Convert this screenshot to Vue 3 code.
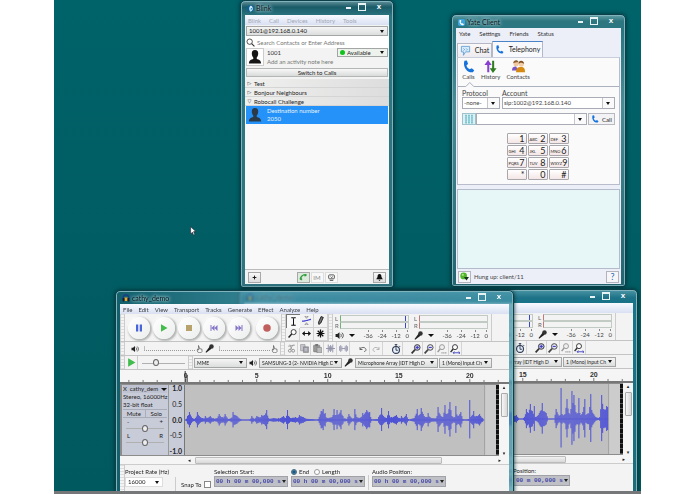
<script setup>
import { h } from 'vue'

const personPath = 'M8 0c3.300 0 4 2.500 3.500 5.500-.3 1.800-1 2.500-1.500 3v1.800c2.500.6 4.800 1.500 5 5.200H1c.2-3.700 2.500-4.600 5-5.200V8.500C5.500 8 4.800 7.300 4.500 5.500 4 2.500 4.700 0 8 0z'
const shapes = {
  blink: '<circle cx="8" cy="8" r="7.500" fill="#0b5f9c"/><path d="M9 1C4 4 4 9 7 15c5 0 8-6 5-11z" fill="#d8f0fb"/><path d="M9 6l3 2-4 5z" fill="#1780bd"/>',
  phone: '<path d="M3 1l3-.5L7.500 5 5.500 6.500c.5 2.500 1.800 4 4 5L12 10l3 2.500-1.500 2.500C7 16.500.500 9 3 1z" fill="#1672dc"/>',
  phoneApp: '<rect width="16" height="16" rx="4" fill="#3ba3dc"/><path d="M4 2l3 0 .5 3.500L6 7c.5 2 1.500 3 3 3.500l1.500-1L13.500 12 12 14C6 14.500 2 8 4 2z" fill="#fff"/>',
  phoneGreen: '<path d="M1 12C3 5 8 1.500 15 2v4l-4 1-.5-2.500C7.500 5.500 5.500 8 5 10.500l2 1.500-2.500 3z" fill="#2f9a3c"/>',
  audacity: '<path d="M2 10C1-1 15-1 14 10" fill="none" stroke="#163a8c" stroke-width="2.600"/><path d="M5 7h6v7H5z" fill="#f2a51f"/><rect x="1" y="8" width="4" height="7" rx="1.500" fill="#111d38"/><rect x="11" y="8" width="4" height="7" rx="1.500" fill="#111d38"/>',
  search: '<circle cx="6.500" cy="6.500" r="4.800" fill="none" stroke="#333" stroke-width="1.500"/><path d="M10 10l5 5" stroke="#333" stroke-width="2"/>',
  person: `<path d="${personPath}" fill="#161616"/>`,
  personGrey: `<path d="${personPath}" fill="#2c3a48"/>`,
  chat: '<path d="M2 2h12v8H8l-3 5v-5H2z" fill="#d8ebfa" stroke="#5b9bd5" stroke-width="1.200" stroke-linejoin="round"/><path d="M5 5l2 2M9 5l2 2M5 8l1-1M9 8l1-1" stroke="#3f86cc"/>',
  history: '<path d="M5 0L.500 6H4v9h2.500V6h3z" fill="#8a3fd0"/><path d="M11 16l4.500-6H12.500V1H10v9H7z" fill="#2f7d22"/>',
  contacts: '<circle cx="5" cy="4.500" r="3.200" fill="#f1c9a0"/><path d="M1.500 4C2-.5 7-.5 8 2.500L4 3z" fill="#8a5b2c"/><circle cx="11.500" cy="5" r="3.200" fill="#f3cda6"/><path d="M8 4.500C8-.5 14.500 0 15 4.500L11 3z" fill="#7c4c20"/><path d="M0 13c0-4 2-5 5-5l3 5z" fill="#7b55c4"/><path d="M5 15c0-5 2-6.500 6-6.500s5 2 5 6.500z" fill="#d68a12"/>',
  keypad: '<path d="M2 1h2.500v14H2zM6.700 1h2.500v14H6.700zM11.500 1H14v14h-2.500z" fill="#63b9c9"/><path d="M1 4.500h14M1 8h14M1 11.500h14" stroke="#c9eaf0" stroke-width=".8"/>',
  green: '<circle cx="6.500" cy="7" r="6" fill="#52b52c"/><circle cx="5" cy="5" r="2" fill="#a5e482"/><path d="M7 9h9l-4.500 6z" fill="#14361a"/>',
  plus: '<path d="M8 2v12M2 8h12" stroke="#111" stroke-width="3"/>',
  screen: '<rect x="1.500" y="2" width="13" height="9" rx="2" fill="none" stroke="#444" stroke-width="2"/><path d="M4 14.500h8M6 6l2 2 3-2" stroke="#444" stroke-width="2" fill="none"/>',
  bell: '<path d="M8 0c4 0 4.500 4 4.500 7l3 5H.500l3-5C3.500 4 4 0 8 0z" fill="#111"/><path d="M5.500 13h5L8 16z" fill="#111"/>',
  pause: '<path d="M2 1h4.500v14H2zM9.500 1H14v14H9.500z" fill="#4664dc"/>',
  play: '<path d="M2 .500L15 8 2 15.500z" fill="#42bc4c"/>',
  stop: '<rect x="2" y="2" width="12" height="12" fill="#b8a26c"/>',
  prev: '<path d="M1 2h2v12H1zM9 2v12L3 8zM15 2v12L9 8z" fill="#8474c8"/>',
  next: '<path d="M13 2h2v12h-2zM7 2v12l6-6zM1 2v12l6-6z" fill="#8474c8"/>',
  record: '<circle cx="8" cy="8" r="7.500" fill="#c0605c"/>',
  ibeam: '<path d="M4 1.500h3l1 1 1-1h3M8 2v12M4 14.500h3l1-1 1 1h3" fill="none" stroke="#111" stroke-width="1.800"/>',
  envelope: '<path d="M5 0h6L8 4zM5 16h6l-3-4z" fill="none" stroke="#555"/><path d="M0 9c4 1 5-1 8-1s4-2 8-2" fill="none" stroke="#4444d0" stroke-width="2.200"/>',
  pencil: '<path d="M9 1l4 1.500-4.500 10L5 15l-.5-4z" fill="#777" stroke="#111" stroke-width="1.500"/>',
  zoom: '<circle cx="10" cy="5.500" r="4.500" fill="#fff" stroke="#222" stroke-width="1.500"/><path d="M6.500 9L1 15" stroke="#222" stroke-width="2.600"/>',
  shift: '<path d="M0 8l5-4.500V7h6V3.500L16 8l-5 4.500V9H5v3.500z" fill="#111"/>',
  star: '<path d="M8 1v14M1 8h14M3 3l10 10M13 3L3 13" stroke="#111" stroke-width="2.200"/>',
  speaker: '<path d="M1 5.500h3L8 2v12l-4-3.500H1z" fill="#222"/><path d="M10 5c1.500 2 1.500 4 0 6M12.500 3c3 3 3 7 0 10" fill="none" stroke="#222" stroke-width="1.300"/>',
  mic: '<circle cx="11.500" cy="4.500" r="4" fill="#333"/><path d="M8 5l3.500 3.500L2 15.500 1 14z" fill="#222"/>',
  hand: '<path d="M5 1l2 6 5 1.500V13l-2 2.500H5L2.500 12l.5-4 2.500 2z" fill="#f7f7f7" stroke="#555" stroke-width="1.400"/>',
  cut: '<path d="M5 1l4 9M11 1L6 9M2 4l12-2" stroke="#999" stroke-width="1.500"/><circle cx="5" cy="12" r="2.500" fill="none" stroke="#888" stroke-width="1.500"/><circle cx="11" cy="12" r="2.500" fill="none" stroke="#888" stroke-width="1.500"/>',
  copy: '<path d="M1 1h8v11H1z" fill="#c8c8d0" stroke="#888"/><path d="M6 5h9v10H6z" fill="#9a9aa6" stroke="#777"/><path d="M8 8h5M8 10h5M8 12h5" stroke="#ddd"/>',
  paste: '<rect x="1" y="2" width="11" height="12" rx="1" fill="#999" stroke="#777"/><path d="M4 0h5v4H4z" fill="#777"/><path d="M7 6h8v10H7z" fill="#bbb" stroke="#777"/>',
  trim: '<path d="M4 1v14M12 1v14M0 8h16M6 4v8M8 2v12M10 4v8" stroke="#8e8ea8" stroke-width="1.600"/>',
  silence: '<path d="M1 4v8M3 2v12M5 4v8M11 4v8M13 2v12M15 4v8M5 8h6" stroke="#8e8ea8" stroke-width="1.500"/>',
  undo: '<path d="M2 4v5h5M2 9c2-5 10-6 12 0 0 3-2 4-4 4" fill="none" stroke="#555" stroke-width="1.700"/>',
  redo: '<path d="M14 4v5H9M14 9C12 4 4 3 2 9c0 3 2 4 4 4" fill="none" stroke="#aaa" stroke-width="1.700"/>',
  timer: '<circle cx="8" cy="9.500" r="5.500" fill="#e8f0fa" stroke="#2b3850" stroke-width="1.800"/><path d="M8 5v5h3M6 1h4M8 1v3M13 3l1.500 1.500" stroke="#2b3850" stroke-width="1.500" fill="none"/>',
  zoomIn: '<circle cx="10" cy="5.500" r="4.500" fill="#c6c6ee" stroke="#333" stroke-width="1.500"/><path d="M6.500 9L1 15" stroke="#333" stroke-width="2.600"/><path d="M10 3v5M7.500 5.500h5" stroke="#3b3bc0" stroke-width="1.600"/>',
  zoomOut: '<circle cx="10" cy="5.500" r="4.500" fill="#e2e2f2" stroke="#444" stroke-width="1.500"/><path d="M6.500 9L1 15" stroke="#444" stroke-width="2.600"/><path d="M7.500 5.500h5" stroke="#3b3bc0" stroke-width="1.600"/>',
  zoomSel: '<circle cx="8" cy="5" r="4" fill="#eee" stroke="#999" stroke-width="1.500"/><path d="M5 8l-4 5" stroke="#999" stroke-width="2.400"/><path d="M7 14h9" stroke="#999" stroke-width="2" stroke-dasharray="2 1"/>',
  zoomFit: '<circle cx="8" cy="5" r="4" fill="#fff" stroke="#333" stroke-width="1.500"/><path d="M5 8l-4 5" stroke="#333" stroke-width="2.400"/><path d="M5 14h11M7 12l-2 2 2 2M14 12l2 2-2 2" stroke="#4040c0" stroke-width="1.400" fill="none"/>'
}

const Icon = (props) =>
  h('svg', { viewBox: '0 0 16 16', width: props.size || 8, height: props.size || 8, 'aria-hidden': 'true', innerHTML: shapes[props.name] })
Icon.props = ['name', 'size']

const blinkMenu = ['Blink', 'Call', 'Devices', 'History', 'Tools']
const groups = [
  { name: 'Test', mark: '▷' },
  { name: 'Bonjour Neighbours', mark: '▷' },
  { name: 'Robocall Challenge', mark: '▽' }
]
const yateMenu = ['Yate', 'Settings', 'Friends', 'Status']
const keys = [
  ['', '1'], ['ABC', '2'], ['DEF', '3'],
  ['GHI', '4'], ['JKL', '5'], ['MNO', '6'],
  ['PQRS', '7'], ['TUV', '8'], ['WXYZ', '9'],
  ['', '*'], ['', '0'], ['', '#']
]
const audacityMenu = ['File', 'Edit', 'View', 'Transport', 'Tracks', 'Generate', 'Effect', 'Analyze', 'Help']
const transport = ['pause', 'play', 'stop', 'prev', 'next', 'record']
const tools = ['ibeam', 'envelope', 'pencil', 'zoom', 'shift', 'star']
const editTools = ['cut', 'copy', 'paste', 'trim', 'silence']
const zoomTools = ['zoomIn', 'zoomOut', 'zoomSel', 'zoomFit']
const ticks = Array.from({ length: 27 }, (_, i) => i - 4)

// Envelope points: [position, half height]
const quiet = [
  [0, 0], [2, 4], [4, 8], [7, 2], [10, 2], [12, 8], [14, 4], [17, 2], [20, 4], [22, 2], [25, 4], [28, 2], [32, 2], [34, 6], [37, 3], [40, 6],
  [43, 1], [46, 2], [48, 8], [52, 4], [56, 1], [64, 0], [67, 4], [70, 1], [72, 4], [77, 5], [80, 5], [82, 10], [84, 2], [89, 2], [94, 2],
  [99, 4], [101, 2], [103, 10], [106, 2], [111, 3], [115, 5], [119, 3], [126, 1], [134, 1], [137, 9], [139, 11], [141, 7], [143, 2],
  [148, 3], [150, 11], [151, 5], [153, 10], [154, 5], [157, 10], [159, 4], [163, 1], [165, 6], [168, 2], [170, 2], [171, 11], [173, 3],
  [176, 2], [179, 7], [183, 10], [186, 8], [188, 1], [194, 1], [198, 12], [200, 4], [203, 2], [205, 9], [208, 3], [213, 5], [216, 2],
  [218, 4], [220, 2], [223, 6], [225, 1], [231, 2], [234, 11], [236, 5], [238, 12], [241, 4], [243, 3], [245, 7], [248, 2], [253, 2],
  [255, 13], [258, 4], [260, 3], [262, 15], [264, 6], [267, 18], [269, 4], [272, 3], [273, 14], [275, 4], [278, 8], [280, 1], [286, 1],
  [287, 20], [288, 3], [291, 9], [294, 4], [297, 6], [300, 2], [302, 0]
]
const loud = [
  [0, 2], [60, 8], [120, 4], [180, 6], [205, 8], [209, 4], [212, 0], [216, 1], [219, 10], [221, 6], [223, 15], [225, 8], [227, 13], [228, 2],
  [231, 4], [235, 16], [239, 6], [241, 0], [247, 0], [249, 10], [252, 3], [253, 4], [254, 31], [255, 5], [258, 5], [260, 20], [262, 6],
  [264, 10], [265, 28], [266, 16], [267, 24], [269, 7], [271, 6], [272, 21], [273, 6], [276, 7], [278, 20], [279, 4], [283, 12], [284, 25],
  [285, 9], [289, 2], [293, 2], [295, 24], [297, 10], [300, 13], [301, 12], [302, 0]
]
function wave(points) {
  let d = ''
  for (let k = 0; k < points.length - 1; k++) {
    const [x0, a0] = points[k]
    const [x1, a1] = points[k + 1]
    for (let x = x0; x < x1; x++) {
      const t = (x - x0) / (x1 - x0)
      const noise = x === x0 ? 1 : 0.5 + 0.4 * Math.abs(Math.sin(x * 12.9))
      const a = Math.max(0.5, (a0 + (a1 - a0) * t) * noise)
      d += `M${x}.5 ${(35 - a).toFixed(1)}V${(35 + a * 0.92).toFixed(1)}`
    }
  }
  return d
}
const recorders = [
  { id: 'back', menu: [], path: wave(loud) },
  { id: 'front', menu: audacityMenu, path: wave(quiet) }
]
</script>

<template>
  <div class="screen">
    <main class="desktop">
      <svg class="cursor" viewBox="0 0 10 16" width="6" height="10" aria-hidden="true"><path d="M1 1v12l3-3 2 5 2-1-2-5h4z" fill="#fff" stroke="#223" /></svg>

      <section class="window blink">
        <header class="title"><Icon name="blink" :size="7" /><h2>Blink</h2>
          <span class="controls"><button class="min" aria-label="Minimize"></button><button class="max" aria-label="Maximize"></button><button class="close" aria-label="Close">x</button></span>
        </header>
        <div class="client">
          <nav class="menu faded"><a v-for="m in blinkMenu" :key="m" href="#">{{ m }}</a></nav>
          <label class="combo account"><select aria-label="Account"><option>1001@192.168.0.140</option></select></label>
          <label class="find"><Icon name="search" :size="9" /><input type="text" placeholder="Search Contacts or Enter Address" aria-label="Search" /></label>
          <div class="profile">
            <span class="avatar"><Icon name="person" :size="14" /></span>
            <div class="who"><b>1001</b><span>Add an activity note here</span></div>
            <label class="combo state"><i></i><select aria-label="Status"><option>Available</option></select></label>
          </div>
          <button class="switch">Switch to Calls</button>
          <div class="groups">
            <button v-for="g in groups" :key="g.name" class="group"><i>{{ g.mark }}</i>{{ g.name }}</button>
            <div class="contact"><Icon name="personGrey" :size="14" /><div><div>Destination number</div><div>2050</div></div></div>
          </div>
          <footer class="blinkbar">
            <button aria-label="Add"><Icon name="plus" :size="5" /></button>
            <span class="mid"><button class="on" aria-label="Call"><Icon name="phoneGreen" :size="8" /></button><button class="pale">IM</button><button class="pale" aria-label="Share screen"><Icon name="screen" :size="7" /></button></span>
            <button aria-label="Alerts"><Icon name="bell" :size="7" /></button>
          </footer>
        </div>
      </section>

      <section class="window yate">
        <header class="title"><Icon name="phoneApp" :size="7" /><h2>Yate Client</h2>
          <span class="controls"><button class="min" aria-label="Minimize"></button><button class="max" aria-label="Maximize"></button><button class="close" aria-label="Close">x</button></span>
        </header>
        <div class="client">
          <nav class="menu"><a v-for="m in yateMenu" :key="m" href="#">{{ m }}</a></nav>
          <div class="tabs">
            <button class="tab"><Icon name="chat" :size="11" />Chat</button>
            <button class="tab active"><Icon name="phone" :size="9" />Telephony</button>
          </div>
          <div class="panel">
            <div class="modes">
              <button><Icon name="phone" :size="13" />Calls</button>
              <button><Icon name="history" :size="13" />History</button>
              <button><Icon name="contacts" :size="13" />Contacts</button>
            </div>
            <svg class="notch" viewBox="0 0 164 5" width="100%" height="5" preserveAspectRatio="none" aria-hidden="true"><path d="M0 4.500H8l4-4 4 4H164" fill="none" stroke="#a9b0be" /></svg>
            <div class="fields">
              <label class="proto">Protocol<span class="combo boxed"><select><option>-none-</option></select></span></label>
              <label class="acct">Account<span class="combo boxed"><select><option>sip:1002@192.168.0.140</option></select></span></label>
            </div>
            <div class="dial">
              <button class="pad" aria-label="Keypad"><Icon name="keypad" :size="10" /></button>
              <label class="combo boxed number"><select aria-label="Number"><option></option></select></label>
              <button class="call"><Icon name="phone" :size="8" />Call</button>
            </div>
            <div class="keys"><button v-for="k in keys" :key="k[1]"><small>{{ k[0] }}</small>{{ k[1] }}</button></div>
          </div>
          <div class="log"></div>
          <footer class="yatebar"><button aria-label="Presence"><Icon name="green" :size="9" /></button><span>Hung up: client/11</span><button class="help">?</button></footer>
        </div>
      </section>

      <section v-for="r in recorders" :key="r.id" class="window audacity" :class="r.id">
        <header class="title"><Icon name="audacity" :size="8" /><h2>cathy_demo</h2>
          <span class="controls"><button class="min" aria-label="Minimize"></button><button class="max" aria-label="Maximize"></button><button class="close" aria-label="Close">x</button></span>
        </header>
        <div class="client">
          <nav class="menu"><a v-for="m in r.menu" :key="m" href="#">{{ m }}</a></nav>

          <div class="bar main">
            <i class="grip"></i>
            <div class="transport"><button v-for="t in transport" :key="t" :aria-label="t"><Icon :name="t" :size="8" /></button></div>
            <i class="grip"></i>
            <div class="tools"><button v-for="t in tools" :key="t" :aria-label="t"><Icon :name="t" :size="9" /></button></div>
            <i class="grip"></i>
            <div v-for="m in ['speaker', 'mic']" :key="m" class="meter" :class="m">
              <div class="level"><span>L</span><i></i></div>
              <div class="level"><span>R</span><i></i></div>
              <div class="scale"><Icon :name="m" :size="9" /><b></b><span>-36</span><span>-24</span><span>-12</span><span>0</span></div>
            </div>
            <div class="rest"></div>
          </div>

          <div class="bar mixer">
            <i class="grip"></i>
            <div class="mix"><Icon name="speaker" :size="8" /><span class="rail"></span><Icon name="hand" :size="8" /><Icon name="mic" :size="9" /><span class="rail"></span><Icon name="hand" :size="8" /></div>
            <i class="grip"></i>
            <div class="set"><button v-for="t in editTools" :key="t" :aria-label="t"><Icon :name="t" :size="9" /></button></div>
            <div class="set"><button aria-label="Undo"><Icon name="undo" :size="8" /></button><button aria-label="Redo"><Icon name="redo" :size="8" /></button></div>
            <div class="set"><button aria-label="Timer"><Icon name="timer" :size="10" /></button></div>
            <div class="set"><button v-for="t in zoomTools" :key="t" :aria-label="t"><Icon :name="t" :size="10" /></button></div>
          </div>

          <div class="bar device">
            <i class="grip"></i>
            <button class="go" aria-label="Play at speed"><Icon name="play" :size="9" /></button>
            <input class="slide" type="range" value="30" aria-label="Speed" />
            <i class="grip"></i>
            <label class="combo host"><select aria-label="Host"><option>MME</option></select></label>
            <Icon name="speaker" :size="8" />
            <label class="combo long"><select aria-label="Output"><option>SAMSUNG-3 (2- NVIDIA High D</option></select></label>
            <Icon name="mic" :size="9" />
            <label class="combo long"><select aria-label="Input"><option>Microphone Array (IDT High D</option></select></label>
            <label class="combo host"><select aria-label="Channels"><option>1 (Mono) Input Ch</option></select></label>
          </div>

          <svg class="ruler" viewBox="0 0 391 12" width="100%" height="12" aria-hidden="true">
            <path v-for="t in ticks" :key="t" :d="`M${(66 + t * 14.28).toFixed(1)} ${t % 5 ? 10 : 9}V12`" stroke="#555" stroke-width=".8" />
            <text v-for="n in [0, 5, 10, 15, 20]" :key="n" :x="66 + n * 14.28" y="8" text-anchor="middle">{{ n }}</text>
            <path d="M65.500 1V12M67.500 5V12" stroke="#333" />
          </svg>

          <div class="track">
            <div class="panelbox">
              <div class="name"><button aria-label="Close track">X</button><button class="tname">cathy_dem</button><b></b></div>
              <div>Stereo, 16000Hz</div>
              <div>32-bit float</div>
              <div class="mute"><button>Mute</button><button>Solo</button></div>
              <div class="sl"><span>-</span><span>+</span></div>
              <input class="slide" type="range" value="50" aria-label="Gain" />
              <div class="sl"><span>L</span><span>R</span></div>
              <input class="slide" type="range" value="50" aria-label="Pan" />
            </div>
            <div class="amps"><b>1.0</b><span>0.5</span><b>0.0</b><span>-0.5</span><b>-1.0</b></div>
            <svg class="wave" viewBox="0 0 314 70" preserveAspectRatio="none" aria-hidden="true">
              <rect width="302" height="70" fill="#bfc0bf" /><rect x="302" width="12" height="70" fill="#cbcccb" />
              <path d="M302.500 0V70" stroke="#a0a0a0" /><path d="M0 35H302" stroke="#6a6ad0" stroke-width=".8" />
              <path :d="r.path" stroke="#4c50d6" />
            </svg>
            <i class="edge"></i>
            <div class="vscroll"><span>▴</span><i></i><span>▾</span></div>
          </div>
          <div class="hscroll"><span>◂</span><i></i><span>▸</span></div>

          <div class="bottom">
            <i class="grip"></i>
            <div class="col rate"><label :for="'rate' + r.id">Project Rate (Hz)</label><span class="combo plain"><select :id="'rate' + r.id"><option>16000</option></select></span></div>
            <label class="snap">Snap To<input type="checkbox" /></label>
            <div class="col time"><label :for="'start' + r.id">Selection Start:</label><span class="stamp"><input :id="'start' + r.id" type="text" value="00 h 00 m 00,000 s" /></span></div>
            <div class="col time"><span class="radios"><label><input type="radio" :name="'mode' + r.id" checked />End</label><label><input type="radio" :name="'mode' + r.id" />Length</label></span><span class="stamp"><input type="text" aria-label="Selection end" value="00 h 00 m 00,000 s" /></span></div>
            <i class="rule"></i>
            <div class="col time"><label :for="'pos' + r.id">Audio Position:</label><span class="stamp"><input :id="'pos' + r.id" type="text" value="00 h 00 m 00,000 s" /></span></div>
          </div>
        </div>
      </section>
    </main>
    <div class="strip"></div>
  </div>
</template>

<style>
body { margin: 0; background: #fff; }
</style>

<style scoped>
* { box-sizing: border-box; }
.screen { height: 100vh; padding: 0 54px; display: flex; flex-direction: column; font: 6px/9px Lato, "Liberation Sans", sans-serif; color: #222; }
.desktop { flex: 1; min-height: 0; position: relative; overflow: hidden; background: linear-gradient(#00636a, #005e64 40%, #00595f); }
.strip { height: 3px; background: #757779; }
.cursor { position: absolute; left: 136px; top: 226px; }
button, input, select { font: inherit; color: inherit; margin: 0; padding: 0; border: 0; border-radius: 0; background: none; min-width: 0; appearance: none; }
button { display: flex; align-items: center; justify-content: center; white-space: nowrap; }
input:focus, select:focus { outline: none; }
a { color: inherit; text-decoration: none; }
svg { display: block; flex: none; }
h2 { margin: 0; font-size: 7px; font-weight: 400; color: #04151a; text-shadow: 0 0 3px #cfe8ec, 0 0 4px #b8dce2; }

.window { position: absolute; display: flex; flex-direction: column; padding: 0 4px 3px; border: 1px solid #0c3f48; border-radius: 5px 5px 3px 3px; box-shadow: inset 0 0 0 1px #7fb3bd, 0 0 4px #002f36; background: #397f8b; }
.blink { left: 186px; top: 0; width: 154px; height: 288px; background: linear-gradient(#66929b, #195c68 6px, #2d7783 16px, #2f7480); }
.yate { left: 397px; top: 14px; width: 175px; height: 273px; padding-bottom: 2px; background: linear-gradient(#66a0a8, #2d7680 6px, #297681 15px, #4a8c96 90px, #22646f); }
.audacity { width: 399px; height: 208px; }
.back { left: 185px; top: 289px; background: linear-gradient(#4c95a5, #1d7287 8px, #16758a 15px, #1c6b7a); }
.front { left: 61px; top: 290px; background: linear-gradient(90deg, rgba(22, 96, 110, .85), rgba(84, 156, 178, .6) 35%, rgba(72, 150, 170, .75)); backdrop-filter: blur(1px); }
.title { height: 13px; flex: none; display: flex; align-items: center; gap: 2px; padding: 1px 0 0 2px; }
.blink .title { height: 14px; }
.controls { margin-left: auto; display: flex; align-items: center; height: 9px; align-self: flex-start; color: #fff; }
.controls button { width: 14px; height: 8px; }
.controls .close { width: 20px; font: bold 8px/8px "Liberation Sans", sans-serif; }
.min::before { content: ""; width: 5px; height: 2px; background: #e8f3f5; margin-top: 3px; }
.max::before { content: ""; width: 6px; height: 5px; border: 1px solid #e8f3f5; border-top-width: 2px; }
.client { flex: 1; min-height: 0; display: flex; flex-direction: column; background: #f2f3f2; }
.menu { height: 10px; flex: none; display: flex; align-items: center; gap: 9px; padding: 0 3px; background: linear-gradient(#f8faff, #d9e0f2); color: #3c4046; }
.menu.faded { color: #a2a8b6; gap: 8px; }
.audacity .menu { gap: 6px; }

.combo { display: grid; align-items: center; height: 10px; min-width: 0; border: 1px solid #a4a6a6; background: linear-gradient(#f4f5f4, #dcdedd); }
.combo select { grid-area: 1 / 1; width: 100%; height: 8px; line-height: 8px; padding: 0 8px 0 2px; overflow: hidden; }
.combo::after { content: ""; grid-area: 1 / 1; justify-self: end; margin-right: 3px; border: 2px solid transparent; border-top: 3px solid #111; border-bottom: 0; pointer-events: none; }
.boxed { height: 12px; background: linear-gradient(90deg, #c4c6cc 1px, #fafafb 1px) right / 12px 100% no-repeat #fff; border-color: #a9acb4; }
.boxed select { height: 10px; padding: 0 12px 0 1px; }
.boxed::after { margin-right: 4px; }
.plain { background: #fff; border-color: #ddd; }

.account { margin: 1px 1px 0; }
.find { height: 12px; display: flex; align-items: center; gap: 2px; padding-left: 1px; background: #fff; }
.find input { flex: 1; height: 9px; }
.find input::placeholder { color: #777; opacity: 1; }
.profile { display: flex; height: 19px; padding: 0 1px; gap: 3px; }
.avatar { width: 18px; height: 18px; display: grid; place-items: center; background: #fff; border: 1px solid #ccc; }
.who { flex: 1; min-width: 0; white-space: nowrap; display: flex; flex-direction: column; color: #777; }
.who b { font-weight: 400; color: #333; }
.state { width: 51px; height: 9px; flex: none; margin-left: -50px; grid-template-columns: 7px 1fr; background: #eef2ec; }
.state i { width: 5px; height: 5px; border-radius: 50%; background: #10c21c; margin-left: 2px; }
.state select { grid-area: 1 / 2; height: 7px; line-height: 7px; }
.state::after { grid-area: 1 / 2; }
.switch { height: 9px; margin: 1px 1px 2px; border: 1px solid #b4b6b6; background: linear-gradient(#f8f8f8, #d9dada); }
.groups { flex: 1; background: #f8f9f8; display: flex; flex-direction: column; }
.group { height: 9px; justify-content: flex-start; background: linear-gradient(90deg, #f0f0ef, #dcdddc); border-bottom: 1px solid #d4d5d4; }
.group i { width: 9px; font: 5px/6px "DejaVu Sans", sans-serif; text-align: center; }
.contact { height: 18px; display: flex; align-items: center; gap: 5px; padding-left: 2px; margin: 0 1px; background: #2492f8; color: #e6f3ff; line-height: 8px; }
.blinkbar { height: 15px; flex: none; display: flex; align-items: center; justify-content: space-between; padding: 0 3px; border-top: 1px solid #bbb; }
.blinkbar button { width: 13px; height: 11px; border: 1px solid #a8a8a8; background: linear-gradient(#f8f8f8, #dcdcdc); }
.blinkbar .mid { display: flex; gap: 1px; }
.blinkbar .on { background: #dceadb; }
.blinkbar .pale { background: #f8f8f8; border-color: #ddd; color: #888; }

.yate .client { background: #eceef8; }
.yate .menu { background: #eceef8; color: #333; }
.tabs { display: flex; align-items: flex-end; padding: 3px 1px 0; height: 19px; flex: none; font-size: 7px; }
.tab { height: 14px; width: 35px; gap: 4px; border: 1px solid #b4b8c6; border-bottom: 0; background: linear-gradient(#fbf8f8, #ecebf0); }
.tab.active { height: 16px; width: 51px; gap: 5px; border-top: 1px solid #4b85c8; background: #f7f9fc; }
.panel { height: 128px; flex: none; display: flex; flex-direction: column; margin: 0 1px; border: 1px solid #b8bccb; border-top-color: #c8cedb; background: #f9faf9; }
.modes { display: flex; gap: 6px; padding: 2px 4px 0; height: 23px; }
.modes button { flex-direction: column; line-height: 8px; color: #444; }
.notch { margin-top: 1px; }
.fields { display: flex; gap: 2px; padding: 2px 4px 0; font-size: 7px; color: #444; }
.fields label { display: block; line-height: 8px; }
.fields select { font-size: 6px; }
.proto { width: 38px; }
.acct { flex: 1; }
.dial { display: flex; padding: 4px 4px 0; }
.pad { width: 14px; border: 1px solid #9fc3cd; background: #dff0f3; }
.number { flex: 1; }
.call { width: 27px; margin-left: 1px; gap: 3px; border: 1px solid #b8b8c0; background: #f3f3f6; }
.keys { display: grid; grid-template-columns: repeat(3, 20px); gap: 1px; justify-content: center; margin-top: 8px; padding-right: 2px; }
.keys button { height: 11px; padding: 0 1px; justify-content: space-between; border: 1px solid #a9a6ac; border-radius: 1px; background: linear-gradient(#fff, #f4e6e6); font: 9px/9px Lato, "Liberation Sans", sans-serif; }
.keys small { font: 4px/7px Lato, "Liberation Sans", sans-serif; align-self: flex-end; }
.log { flex: 1; margin: 4px 1px 0; border: 1px solid #b4bccb; background: #e7f6f6; }
.yatebar { height: 15px; flex: none; display: flex; align-items: center; gap: 3px; padding: 0 2px; color: #444; }
.yatebar button { width: 13px; height: 12px; border: 1px solid #b4b4be; background: #f6f6f8; }
.yatebar .help { margin-left: auto; color: #2b6cb0; font-size: 9px; }

.bar { display: flex; flex: none; border-bottom: 1px solid #c4c4c4; }
.grip { width: 5px; flex: none; border-left: 1px solid #ccc; border-right: 1px solid #ccc; background: repeating-linear-gradient(#ddd 0 1px, #f4f4f4 1px 3px); }
.main { height: 28px; }
.transport { width: 156px; display: flex; align-items: center; gap: 3px; padding-left: 3px; }
.transport button { width: 22px; height: 22px; border-radius: 50%; background: linear-gradient(135deg, #fff, #eceded); box-shadow: 1px 1px 2px 1px #b2b3b3, -1px -1px 1px #fff; }
.transport button:last-child { margin-left: 3px; }
.tools { width: 42px; display: grid; grid-template-columns: repeat(3, 1fr); }
.tools button { border: 1px solid #d0d0d0; border-width: 0 1px 1px 0; }
.tools button:first-child { border: 1px solid #777; border-width: 1px 0 0 1px; background: #f9f9f9; }
.meter { width: 79px; padding: 1px 3px 0 2px; }
.level { display: flex; gap: 1px; height: 7px; line-height: 7px; color: #666; }
.level span { width: 4px; }
.level i { flex: 1; border: 1px solid #c2cac4; border-left-color: #74b078; background: linear-gradient(#3d44cc, #3d44cc) 64px 0 / 1px 100% no-repeat; }
.meter.mic .level i { border-left-color: #c47a74; background: none; }
.scale { display: flex; align-items: center; justify-content: space-between; height: 12px; color: #444; }
.scale b, .name b { border: 3px solid transparent; border-top: 3px solid #111; border-bottom: 0; }
.scale b { margin-right: 4px; }
.scale span { background: linear-gradient(#888, #888) center 0 / 1px 2px no-repeat; padding-top: 1px; }
.rest { border-left: 1px solid #ccc; flex: 1; }
.mixer { height: 14px; }
.mix { width: 155px; display: flex; align-items: center; gap: 1px; padding: 0 1px 0 6px; }
.rail { flex: 1; height: 5px; border-bottom: 1px dotted #999; border-left: 1px solid #bbb; margin-left: 4px; }
.set { display: flex; padding-right: 7px; }
.set button { width: 13px; border-right: 1px solid #d4d4d4; }
.device { height: 14px; align-items: center; gap: 1px; font-size: 5px; }
.device > .grip { height: 13px; }
.device > svg { margin: 0 1px; }
.go { width: 12px; height: 13px; border-right: 1px solid #ccc; }
.slide { width: 43px; height: 8px; margin: 0 2px 0 3px; background: linear-gradient(#b0b0b0, #b0b0b0) 0 4px / 100% 1px no-repeat; }
.slide::-webkit-slider-thumb { appearance: none; width: 6px; height: 7px; border: 1px solid #666; border-radius: 50%; background: #eee; }
.host { width: 53px; }
.long { width: 83px; }
.ruler { background: #f4f5f4; }
.ruler text { font: bold 7px "Liberation Sans", sans-serif; fill: #333; }
.track { height: 74px; flex: none; display: flex; padding: 3px 0 1px 2px; background: linear-gradient(#777 2px, #8c8c8c 2px); }
.panelbox { width: 47px; padding: 0 1px; background: #c8cbd8; line-height: 8px; display: flex; flex-direction: column; white-space: nowrap; border-right: 1px solid #999; }
.name { display: flex; align-items: center; justify-content: space-between; height: 8px; background: #bfc2d0; }
.mute { display: flex; border: 1px solid #a9adb9; border-width: 1px 0; height: 9px; }
.mute button { flex: 1; height: 7px; }
.mute button + button { border-left: 1px solid #a9adb9; }
.sl { display: flex; justify-content: space-between; padding: 0 4px; height: 5px; line-height: 6px; margin-top: 1px; }
.panelbox .slide { width: auto; margin: 0 3px; flex: none; }
.amps { width: 16px; display: flex; flex-direction: column; justify-content: space-between; text-align: right; padding-right: 2px; background: #c8cbd8; border-right: 1px solid #777; font-size: 7px; line-height: 7px; }
.wave { flex: 1; min-width: 0; height: 70px; }
.edge { width: 3px; background: repeating-linear-gradient(#111 0 4px, #555 4px 5px); }
.vscroll { width: 10px; margin: -1px 0 -1px; display: flex; flex-direction: column; align-items: center; justify-content: space-between; background: #f4f5f4; font: 5px/6px "DejaVu Sans", sans-serif; }
.vscroll i { width: 7px; height: 24px; margin-bottom: 30px; border: 1px solid #aaa; border-radius: 1px; background: linear-gradient(90deg, #f6f6f6, #d8d8d8); }
.hscroll { height: 9px; flex: none; display: flex; align-items: center; padding: 0 8px 0 68px; border-bottom: 1px solid #ccc; background: #f4f5f4; font: 5px/6px "DejaVu Sans", sans-serif; }
.hscroll i { width: 247px; height: 7px; margin: 0 auto 0 4px; border: 1px solid #bbb; border-radius: 1px; background: linear-gradient(#f2f2f2, #d8d8d8); }
.bottom { flex: none; height: 27px; display: flex; gap: 3px; white-space: nowrap; }
.bottom .grip { margin-right: -3px; border-left: 0; }
.col { display: flex; flex-direction: column; padding-top: 2px; }
.rate { width: 47px; }
.rate .combo { width: 38px; margin-top: 1px; }
.time { width: 74px; }
.snap { display: flex; align-items: center; justify-content: space-between; align-self: flex-end; height: 14px; margin-bottom: 1px; padding-left: 5px; width: 36px; border-left: 1px solid #ccc; }
.snap input { width: 7px; height: 7px; flex: none; border: 1px solid #888; background: #fff; }
.radios { display: flex; gap: 5px; }
.radios label { display: flex; align-items: center; gap: 2px; }
.radios input { width: 6px; height: 6px; border: 1px solid #999; border-radius: 50%; background: #fff; }
.radios input:checked { background: radial-gradient(#145a86 1px, #8fbcd8 3px); border-color: #467; }
.stamp { display: flex; align-items: center; height: 11px; padding: 0 1px; background: #bfc0c6; border: 1px solid #a0a2a8; }
.stamp input { flex: 1; width: 0; height: 9px; font: bold 6px/9px "Liberation Mono", monospace; color: #4548a8; }
.stamp::after { content: ""; border: 2px solid transparent; border-top: 3px solid #222; border-bottom: 0; }
.rule { width: 1px; background: #ccc; margin: 10px 0 2px; }
</style>
